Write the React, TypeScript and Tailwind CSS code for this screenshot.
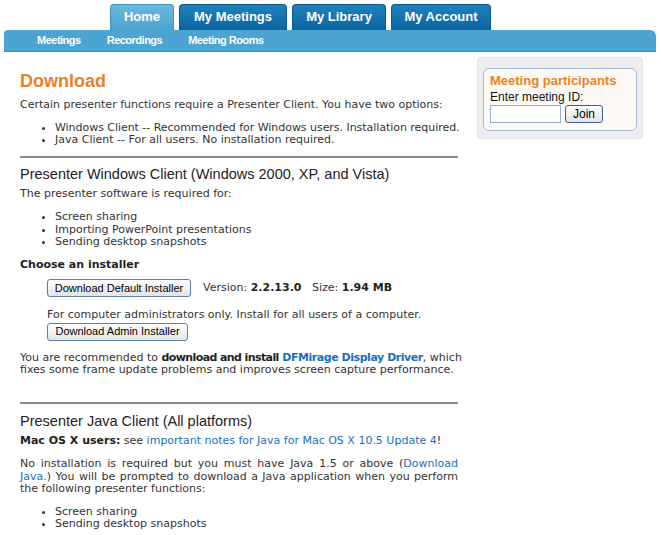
import React from "react";

const body = { fontFamily: '"DejaVu Sans", Verdana, sans-serif' } as React.CSSProperties;
const arial = { fontFamily: '"Liberation Sans", Arial, sans-serif' } as React.CSSProperties;

function Tab({ label, w, active }: { label: string; w: string; active?: boolean }) {
  return (
    <div
      className={`${w} h-[26px] rounded-t-[4px] flex items-center justify-center text-white font-bold text-[13px] border border-b-0 ${
        active
          ? "bg-gradient-to-b from-[#6cb8e0] to-[#4aa3d1] border-[#3d93c2]"
          : "bg-gradient-to-b from-[#1f82bd] to-[#0a64a0] border-[#0a5b91]"
      }`}
      style={arial}
    >
      {label}
    </div>
  );
}

function Btn({ children, w }: { children: React.ReactNode; w: string }) {
  return (
    <button
      className={`${w} h-[18px] rounded-[3px] border border-[#5b7fa8] bg-gradient-to-b from-white to-[#e4e4e4] text-[11px] text-black flex items-center justify-center`}
      style={arial}
    >
      {children}
    </button>
  );
}

export default function App() {
  return (
    <div className="w-[661px] h-[535px] bg-white overflow-hidden text-[11px] leading-[12.5px] text-[#333]" style={body}>
      {/* header */}
      <div className="pt-[4px]">
        <div className="flex pl-[110px] gap-[5px]">
          <Tab label="Home" w="w-[64px]" active />
          <Tab label="My Meetings" w="w-[108px]" />
          <Tab label="My Library" w="w-[94px]" />
          <Tab label="My Account" w="w-[100px]" />
        </div>
        <div
          className="ml-[4px] mr-[5px] h-[22px] bg-[#4ba4d2] rounded-tl-[4px] rounded-tr-[6px] border-b border-[#3b8dba] flex items-center pl-[33px] gap-[26px] text-white font-bold text-[11px] tracking-[-0.5px]"
          style={arial}
        >
          <span>Meetings</span>
          <span>Recordings</span>
          <span>Meeting Rooms</span>
        </div>
      </div>

      <div className="flex pl-[20px]">
        {/* main column */}
        <div className="w-[438px]">
          <h1 className="mt-[19px] text-[18px] leading-[21px] font-bold text-[#e8821e]" style={arial}>
            Download
          </h1>
          <p className="mt-[7px]">Certain presenter functions require a Presenter Client. You have two options:</p>
          <ul className="mt-[10px] list-disc pl-[35px] whitespace-nowrap">
            <li className="tracking-[-0.04px]">Windows Client -- Recommended for Windows users. Installation required.</li>
            <li>Java Client -- For all users. No installation required.</li>
          </ul>
          <div className="mt-[9px] h-[2px] bg-[#8c8c8c]" />

          <h2 className="mt-[8px] text-[14.5px] leading-[17px] text-[#222]" style={arial}>
            Presenter Windows Client (Windows 2000, XP, and Vista)
          </h2>
          <p className="mt-[5px]">The presenter software is required for:</p>
          <ul className="mt-[11px] list-disc pl-[35px]">
            <li>Screen sharing</li>
            <li>Importing PowerPoint presentations</li>
            <li>Sending desktop snapshots</li>
          </ul>
          <p className="mt-[10px] font-bold text-[#222]">Choose an installer</p>

          <div className="mt-[8px] pl-[27px] flex items-center">
            <Btn w="w-[144px]">Download Default Installer</Btn>
            <span className="ml-[12px]">
              Version: <b className="text-[#222]">2.2.13.0</b>&nbsp;&nbsp; Size: <b className="text-[#222]">1.94 MB</b>
            </span>
          </div>
          <p className="mt-[12px] pl-[27px]">For computer administrators only. Install for all users of a computer.</p>
          <div className="mt-[1px] pl-[27px]">
            <Btn w="w-[141px]">Download Admin Installer</Btn>
          </div>
          <p className="mt-[11px] whitespace-nowrap">
            You are recommended to <b className="text-[#222] tracking-[-0.6px]">download and install</b>{" "}
            <b className="text-[#1a6fc0] tracking-[-0.45px]">DFMirage Display Driver</b>, which
            <br />
            fixes some frame update problems and improves screen capture performance.
          </p>
          <div className="mt-[25px] h-[2px] bg-[#8c8c8c]" />

          <h2 className="mt-[9px] text-[14.5px] leading-[17px] text-[#222]" style={arial}>
            Presenter Java Client (All platforms)
          </h2>
          <p className="mt-[5px]">
            <b className="text-[#222]">Mac OS X users:</b> see{" "}
            <span className="text-[#1a6fc0]">important notes for Java for Mac OS X 10.5 Update 4</span>!
          </p>
          <p className="mt-[11px] text-justify">
            No installation is required but you must have Java 1.5 or above (<span className="text-[#1a6fc0]">Download Java.</span>) You will be prompted to download a Java application when you perform the following presenter functions:
          </p>
          <ul className="mt-[10px] list-disc pl-[35px]">
            <li>Screen sharing</li>
            <li>Sending desktop snapshots</li>
          </ul>
        </div>

        {/* sidebar */}
        <div className="ml-[19px] mt-[5px] w-[166px] h-[82px] bg-[#eeeeee] rounded-[4px] border border-[#e2e2e2] px-[5px] pt-[10px]">
          <div className="h-[63px] rounded-[6px] border border-[#9fb8da] bg-[#fdfaf6] px-[6px] pt-[4px]" style={arial}>
            <div className="text-[13px] leading-[15px] font-bold text-[#e8821e]">Meeting participants</div>
            <div className="mt-[2px] text-[12px] leading-[14px] text-[#111]">Enter meeting ID:</div>
            <div className="mt-[1px] flex gap-[4px]">
              <div className="w-[71px] h-[18px] border border-[#8fb0d4] bg-white" />
              <button className="w-[38px] h-[18px] rounded-[3px] border border-[#3c5f8a] bg-gradient-to-b from-white to-[#e4e4e4] text-[12px] text-black flex items-center justify-center">
                Join
              </button>
            </div>
          </div>
        </div>
      </div>
    </div>
  );
}
